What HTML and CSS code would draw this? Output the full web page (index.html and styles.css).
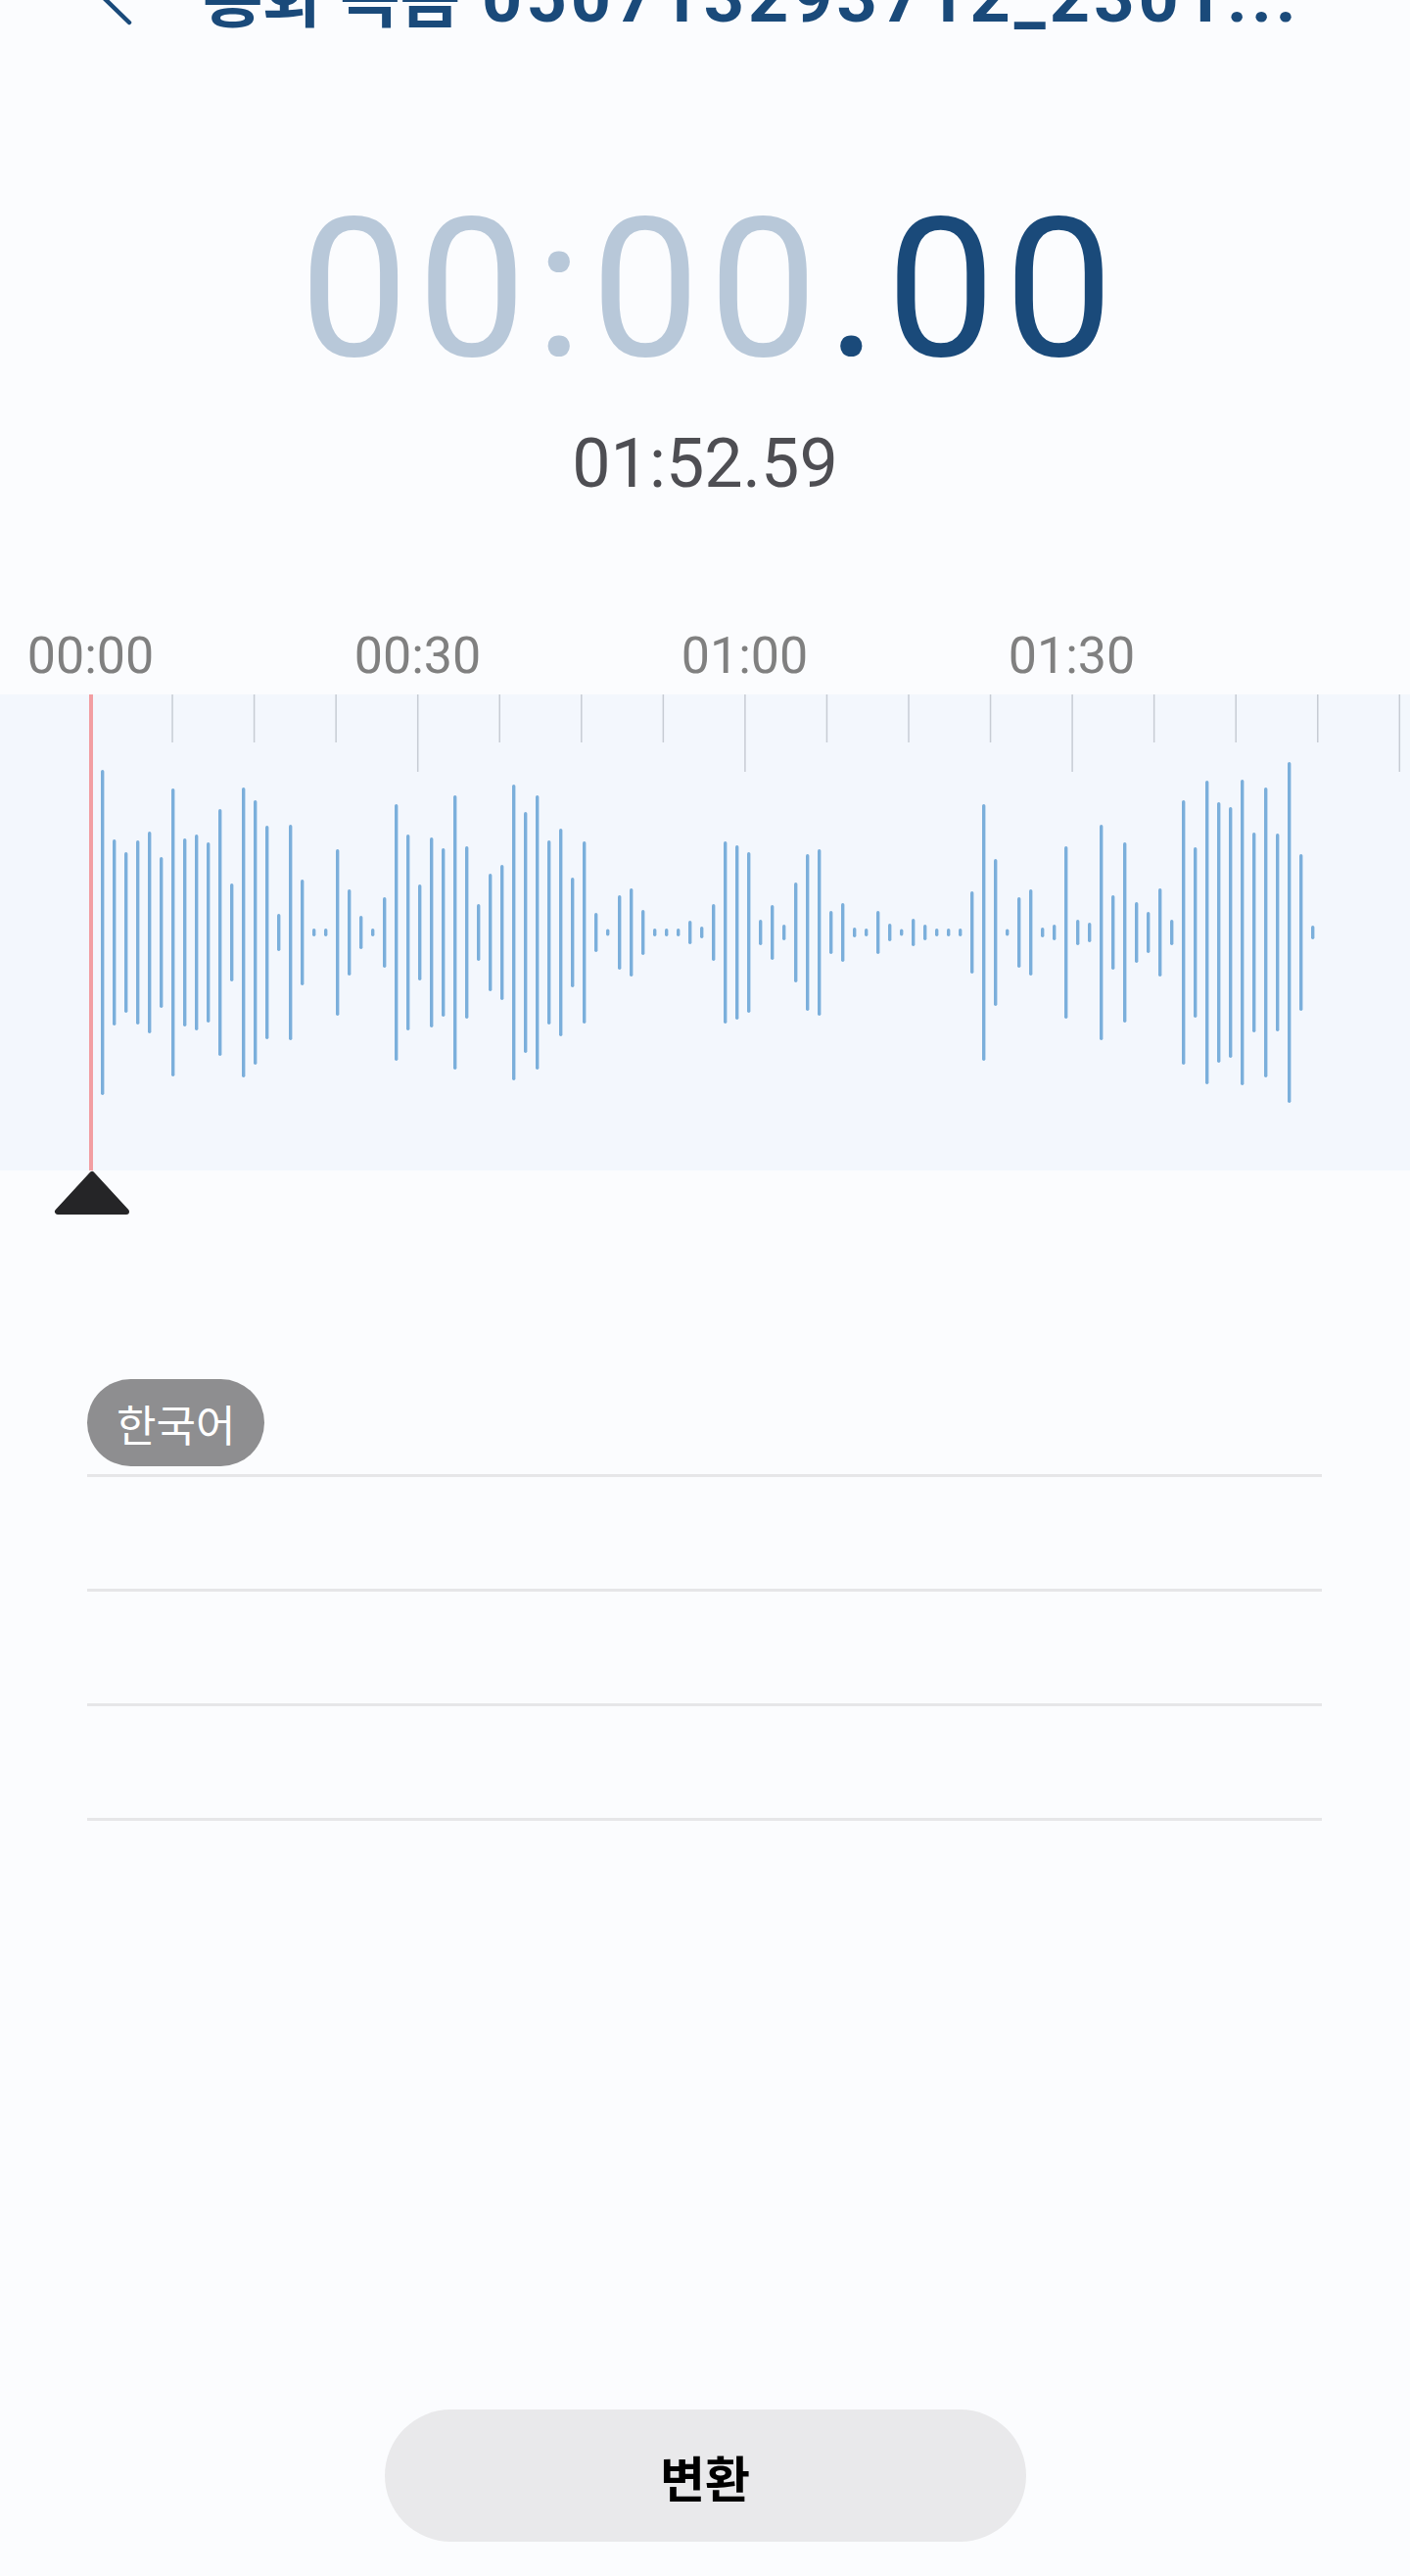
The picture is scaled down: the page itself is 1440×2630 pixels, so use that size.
FILE: index.html
```html
<!DOCTYPE html>
<html lang="ko">
<head>
    <meta charset="UTF-8">
    <meta name="viewport" content="width=device-width, initial-scale=1.0">
    <title>통화 녹음</title>
    <link rel="stylesheet" href="styles.css">
</head>
<body>
    <header class="top-bar">
        <a href="#" class="back-btn" aria-label="뒤로">
            <svg width="40" height="72" viewBox="0 0 40 72"><polyline points="36,5 4,36 36,67"/></svg>
        </a>
        <h1 class="title"><span class="title-ko">통화 녹음</span> 050713293712_2301...</h1>
    </header>

    <div class="timer"><span class="timer-past">00:00</span><span class="timer-now">.00</span></div>
    <div class="duration">01:52.59</div>

    <div class="axis-labels">
        <span>00:00</span>
        <span>00:30</span>
        <span>01:00</span>
        <span>01:30</span>
    </div>
    <div class="wave-band">
        <svg id="wave" width="1440" height="486" viewBox="0 0 1440 486"></svg>
    </div>
    <div class="playhead-handle">
        <svg width="80" height="46" viewBox="0 0 80 46"><polygon points="40,4 5,42 75,42"/></svg>
    </div>

    <section class="transcript">
        <div class="transcript-head"><span class="lang-pill">한국어</span></div>
        <div class="transcript-row"></div>
        <div class="transcript-row"></div>
        <div class="transcript-row"></div>
    </section>

    <div class="bottom-bar">
        <button class="convert-btn">변환</button>
    </div>

    <script>
        // half heights of the amplitude bars, left to right
        const levels = [
            166, 95, 82, 94, 103, 77, 147, 96, 100, 92, 126, 50, 148, 135, 109, 19, 110, 54, 4, 4,
            85, 44, 17, 4, 36, 131, 100, 49, 97, 86, 140, 88, 29, 60, 69, 151, 123, 140, 94, 106,
            56, 93, 20, 3, 38, 45, 23, 4, 4, 4, 12, 6,
            29, 93, 89, 82, 13, 28, 8, 51, 80, 85, 22, 30, 5, 4, 22, 9, 3, 14, 8, 4,
            4, 4, 42, 131, 75, 3, 36, 44, 5, 8, 88, 13, 10, 110, 38, 92, 31, 21, 45, 13,
            135, 87, 155, 133, 128, 156, 102, 148, 101, 174, 80, 7
        ];

        const wave = document.getElementById('wave');
        const ns = 'http://www.w3.org/2000/svg';

        function add(tag, attrs) {
            const el = document.createElementNS(ns, tag);
            for (const key in attrs) el.setAttribute(key, attrs[key]);
            wave.appendChild(el);
        }

        // one tick every 7.5 s, a long one every 30 s
        for (let i = 1; i <= 16; i++) {
            const x = 92.5 + 83.55 * i;
            add('line', { x1: x, x2: x, y1: 0, y2: i % 4 === 0 ? 79 : 49, class: 'tick' });
        }

        levels.forEach((h, i) => {
            const x = 104.7 + 12 * i;
            const half = Math.max(h, 3.5);
            add('rect', { x: x - 1.7, y: 243 - half, width: 3.4, height: half * 2, rx: 1.7, class: 'bar' });
        });

        add('rect', { x: 91, y: 0, width: 4, height: 486, class: 'playhead' });
    </script>
</body>
</html>
```

FILE: styles.css
```css
html, body {
    margin: 0;
    padding: 0;
}
body {
    font-family: Roboto, "Noto Sans CJK KR", sans-serif;
    background-color: #fbfcfe;
    color: #333;
    min-height: 100vh;
    display: flex;
    flex-direction: column;
    overflow: hidden;
}

.top-bar {
    display: flex;
    align-items: center;
    height: 96px;
    margin-top: -56px;
    padding-left: 96px;
}
.back-btn {
    display: flex;
}
.back-btn polyline {
    fill: none;
    stroke: #1a4a7a;
    stroke-width: 4.5;
    stroke-linecap: round;
    stroke-linejoin: round;
}
.title {
    margin: 0 0 0 71px;
    font-size: 72px;
    font-weight: 700;
    letter-spacing: 4px;
    color: #1a4a7a;
    white-space: nowrap;
}
.title-ko {
    font-size: 67px;
    letter-spacing: 0;
}

.timer {
    margin-top: 156px;
    padding-left: 12px;
    font-size: 198px;
    line-height: 198px;
    letter-spacing: 9px;
    text-align: center;
}
.timer-past {
    color: #b8c8d9;
}
.timer-now {
    color: #1a4a7a;
}
.duration {
    margin-top: 44px;
    font-size: 70px;
    line-height: 70px;
    text-align: center;
    color: #4e4e53;
}

.axis-labels {
    display: flex;
    gap: 204px;
    margin-top: 136px;
    padding-left: 27.5px;
    font-size: 52px;
    line-height: 52px;
    color: #808080;
}
.axis-labels span {
    width: 130px;
    text-align: center;
}

.wave-band {
    margin-top: 13px;
    height: 486px;
    background: #f3f7fd;
}
.wave-band svg {
    display: block;
}
.tick {
    stroke: #c7ccd4;
    stroke-width: 1.5;
}
.bar {
    fill: #7bafdb;
}
.playhead {
    fill: #f29ea2;
}
.playhead-handle {
    display: flex;
    padding-left: 54px;
}
.playhead-handle polygon {
    fill: #252527;
    stroke: #252527;
    stroke-width: 6;
    stroke-linejoin: round;
}

.transcript {
    margin: 167px 90px 0 89px;
}
.transcript-head {
    display: flex;
    padding-bottom: 8px;
    border-bottom: 3px solid #e6e6e8;
}
.lang-pill {
    display: inline-flex;
    align-items: center;
    height: 89px;
    padding: 0 30px;
    border-radius: 45px;
    background: #8e8e90;
    color: white;
    font-size: 44px;
}
.transcript-row {
    height: 114px;
    border-bottom: 3px solid #e6e6e8;
}

.bottom-bar {
    margin-top: auto;
    padding-bottom: 35px;
    display: flex;
    justify-content: center;
}
.convert-btn {
    width: 655px;
    height: 135px;
    border: none;
    border-radius: 68px;
    background: #e9e9eb;
    color: #000;
    font-family: Roboto, "Noto Sans CJK KR", sans-serif;
    font-size: 50px;
    font-weight: 700;
    cursor: pointer;
}
```
